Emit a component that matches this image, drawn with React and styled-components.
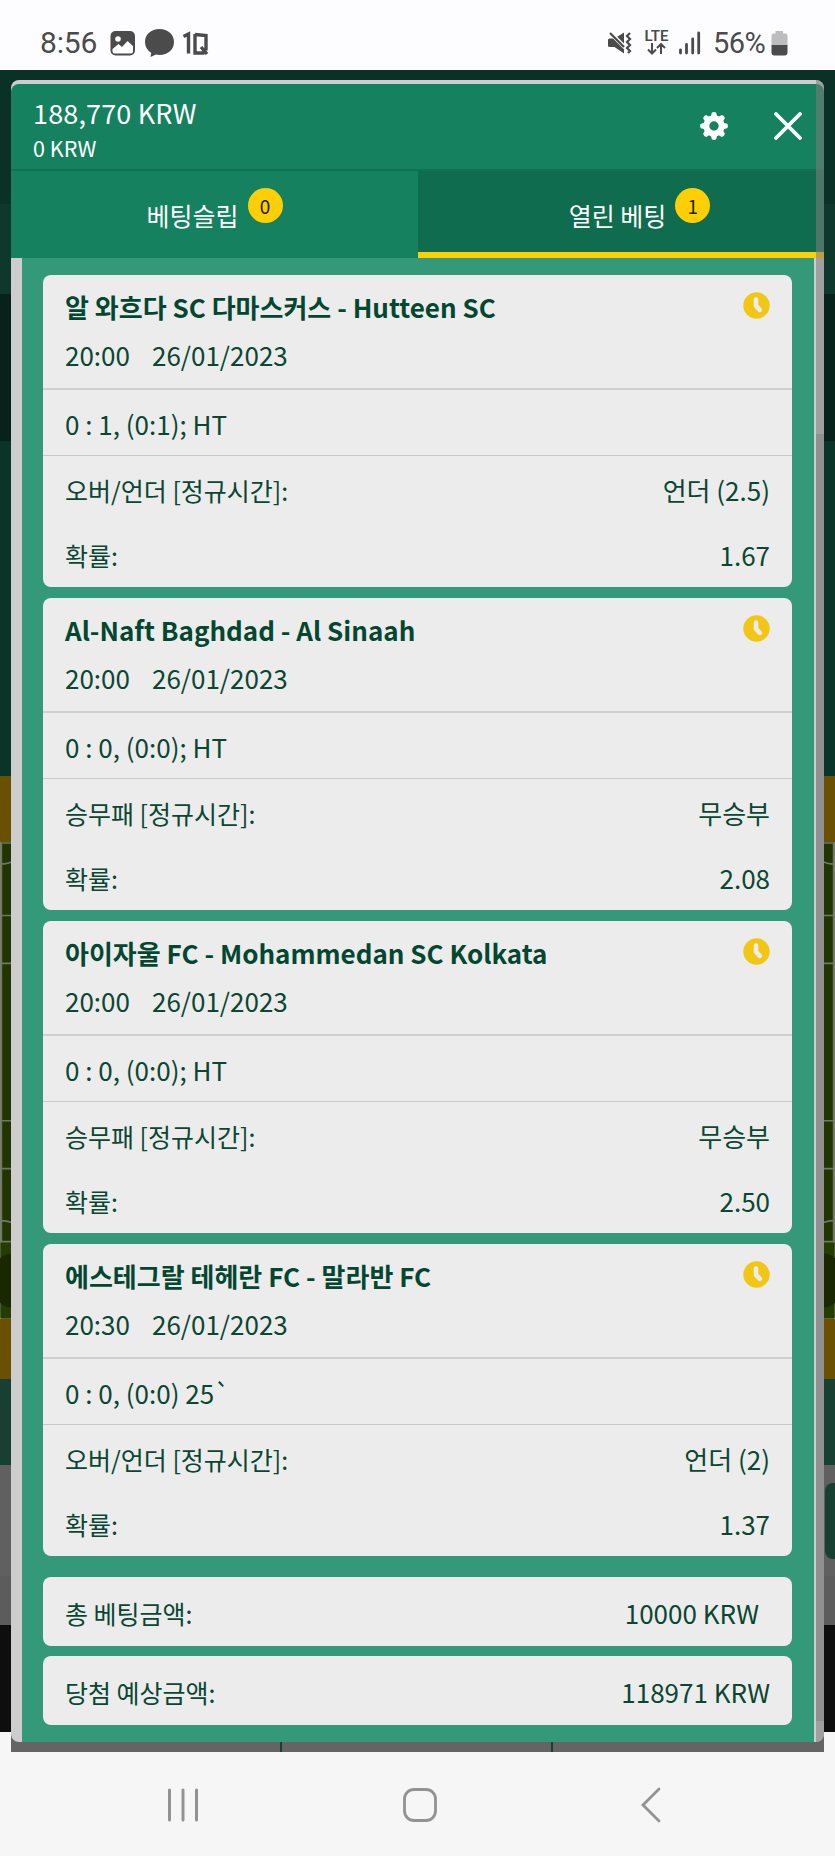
import React from 'react';
import styled, { createGlobalStyle } from 'styled-components';

const Global = createGlobalStyle`
  * { box-sizing: border-box; }
  body { margin: 0; font-family: "Noto Sans CJK KR", sans-serif; }
`;
const Phone = styled.div`
  width: 835px; height: 1856px; overflow: hidden;
  display: flex; flex-direction: column; background: #f6f6f6;
`;
const StatusBar = styled.header`
  height: 69.5px; flex: none; background: #fdfdff; color: #4b4b4b;
  display: flex; align-items: center; justify-content: space-between;
  padding: 16px 47px 0 40px;
  font: 400 30px/36px Roboto, sans-serif;
`;
const StatusGroup = styled.div`
  display: flex; align-items: center;
  > svg { display: block; flex: none; }
`;
const Clock = styled.span`width: 70px; letter-spacing: -0.2px; white-space: nowrap;`;
const Percent = styled.span`width: 58px; font-size: 29px; letter-spacing: -0.5px; white-space: nowrap;`;
const Network = styled.span`
  display: flex; flex-direction: column; align-items: center; width: 27px; margin-right: 8px;
  font: 600 15px/13px Roboto, sans-serif;
`;

const Stage = styled.main`
  display: grid; height: 1682px; flex: none;
  > * { grid-area: 1 / 1; }
`;
const Backdrop = styled.div`display: flex; flex-direction: column; overflow: hidden;`;
const Band = styled.div`
  flex: none; height: ${p => p.$h}px; background: ${p => p.$bg};
  display: flex; justify-content: flex-end; align-items: flex-start;
`;
const SideButton = styled.div`
  width: 40px; height: 76px; margin: 18px -30px 0 0; border-radius: 8px; background: #173f32;
`;
const FooterCells = styled.div`
  align-self: flex-end; width: 813px; height: 20px; margin-right: 11px; background: #646464;
  display: grid; grid-template-columns: 271px 271px 1fr;
`;
const FooterCell = styled.span`border-right: ${p => (p.$last ? 0 : 2)}px solid #173f32;`;

const Dialog = styled.section`
  position: relative; margin: 10.5px 11px 0; width: 813px; height: 1662px;
  border-radius: 8px; overflow: hidden; background: #cdcdcd;
  display: flex; flex-direction: column;
`;
const Header = styled.div`
  height: 86.5px; margin-top: 4px; flex: none; background: #15815f; color: #fff;
  border-radius: 8px 8px 0 0; border-bottom: 2px solid #107253;
  display: flex; justify-content: space-between; padding: 0 22px;
`;
const Balance = styled.div`
  display: flex; flex-direction: column; padding-top: 10px;
`;
const Amount = styled.span`font-size: 27px; line-height: 38px; letter-spacing: .15px;`;
const Bonus = styled.span`font-size: 21.5px; line-height: 32px;`;
const Actions = styled.div`
  display: flex; gap: 46px; align-items: center; height: 84px;
`;
const Tabs = styled.div`
  height: 87px; flex: none; display: grid; grid-template-columns: 407px 1fr; background: #15815f;
`;
const Tab = styled.div`
  display: flex; justify-content: center; color: #fff; font-size: 25px; line-height: 36px;
  padding-top: ${p => (p.$active ? 26 : 26)}px;
  background: ${p => (p.$active ? '#106c4f' : '#15815f')};
  border-bottom: ${p => (p.$active ? '6px solid #ffcf06' : '0')};
  padding-left: ${p => (p.$active ? 37 : 0)}px;
  ${p => p.$active && 'padding-right: 0;'}
`;
const Count = styled.span`
  width: 35px; height: 35px; border-radius: 50%; margin: -9px 0 0 9px;
  background: #ffcf06; color: #181c10; font-size: 19px; line-height: 35px; text-align: center;
`;
const List = styled.div`
  flex: 1; margin: 0 10.5px 0 11px; background: #349979;
  padding: 17px 21.5px 0 21px; color: #0a4632;
`;
const Card = styled.article`
  height: 312px; margin-bottom: 11px; border-radius: 8px; background: #ececec;
  font-size: 26px; line-height: 38px;
`;
const CardTop = styled.div`
  height: 115px; padding: 13px 22px 0; border-bottom: 2px solid #cfcfcf;
`;
const TitleRow = styled.div`
  display: flex; justify-content: space-between; height: 48px;
  > svg { margin-top: 4.5px; }
`;
const Teams = styled.h2`
  margin: 0; font: 700 26px/38px "Noto Sans CJK KR", sans-serif; color: #044731;
  letter-spacing: ${p => p.$ls || 0}px; white-space: nowrap;
`;
const Kickoff = styled.div`display: flex; gap: 22px;`;
const Score = styled.div`
  height: 66px; padding: 15px 22px 0; border-bottom: 1px solid #c8c8c8;
`;
const Line = styled.div`
  display: flex; justify-content: space-between; height: 65px; padding: 15px 22px 0;
`;
const Label = styled.span`font-size: 25px;`;
const Total = styled.div`
  height: 69px; border-radius: 8px; background: #ececec; font-size: 26px; line-height: 38px;
  margin-top: ${p => p.$mt}px; padding: 17px ${p => p.$pr}px 0 22px;
  display: flex; justify-content: space-between;
`;
const ScrollTrack = styled.div`
  position: absolute; right: 0; top: 0; width: 8px; height: 100%;
  background: rgba(125,125,125,.56);
`;
const ScrollThumb = styled.div`
  margin-top: 353.5px; height: 1287px; background: rgba(120,120,120,.4);
`;
const NavBar = styled.nav`
  flex: 1; background: #f6f6f6; display: flex; justify-content: space-between;
  padding: 35px 173px 0 166px;
`;

const ClockIcon = () => (
  <svg width="27" height="27" viewBox="0 0 27 27">
    <circle cx="13.5" cy="13.5" r="13.2" fill="#f1c615" />
    <path d="M13 7.5v6.3l3.8 4" fill="none" stroke="#ececec" strokeWidth="4.6" strokeLinecap="round" strokeLinejoin="round" />
  </svg>
);
const PitchSide = () => (
  <svg width="835" height="477" viewBox="0 842 835 477">
    <rect y="842" width="835" height="477" fill="#203502" />
    <rect y="1243" width="835" height="76" fill="#263d02" />
    <rect x="-5" y="1254" width="845" height="54" rx="16" fill="#1a2801" />
    <g fill="none" stroke="#707864" strokeWidth="1.6">
      <path d="M1 843H834V1242H1ZM1 915.5H834M1 963.5H834M1 1121H834M1 1169H834" />
      <path d="M0 864Q8 864 13 861M835 864Q827 864 822 861M0 1221Q8 1221 13 1224M835 1221Q827 1221 822 1224" />
    </g>
  </svg>
);
const StatusLeft = () => (
  <StatusGroup>
    <Clock>8:56</Clock>
    <svg width="100" height="30" viewBox="110 28 100 30">
      <rect x="110.5" y="31" width="24.5" height="24.5" rx="5" fill="#4b4b4b" />
      <circle cx="118" cy="39" r="2.8" fill="#fdfdff" />
      <path d="M112.5 49l6-5 3.500 3 5.500-6 5.500 5v5.500q0 2-2 2h-16.500q-2 0-2-2Z" fill="#fdfdff" />
      <path d="M159.500 29c8.500 0 14.500 5.500 14.500 13s-6 13-14.500 13q-2 0-3.500-.4l-5.500 2.400q.2-2 .8-4-6.300-4-6.300-11c0-7.500 6-13 14.500-13Z" fill="#4b4b4b" />
      <path d="M183.500 36.500l5-2.500v19.500M195 34v19l9.500 0M195 34.500l11 1v15M201 47l6 7" fill="none" stroke="#4b4b4b" strokeWidth="3.400" />
    </svg>
  </StatusGroup>
);
const StatusRight = () => (
  <StatusGroup>
    <svg width="36" height="26" viewBox="606 30 36 26">
      <path d="M607 40q0-1.500 1.500-1.500h5l9.500-6v21l-9.500-6.500h-5q-1.500 0-1.500-1.500Z" fill="#4b4b4b" />
      <path d="M608 31.500l16 16" stroke="#fdfdff" strokeWidth="4" />
      <path d="M609 33l14 14M629 33l-3 3 3 3-3 3 3 3-3 3 3 3-2 2" fill="none" stroke="#4b4b4b" strokeWidth="2.200" />
    </svg>
    <Network>LTE
      <svg width="19" height="12" viewBox="0 0 19 12"><path d="M5 0v10M1 6.500l4 4 4-4M14 11V1M10 5l4-4 4 4" fill="none" stroke="#4b4b4b" strokeWidth="2" /></svg>
    </Network>
    <svg width="35" height="24" viewBox="677 31 35 24">
      <path d="M679.500 50v3M685.500 44.500V53M691.700 39V53M697.700 33V53" stroke="#4b4b4b" strokeWidth="2.800" strokeLinecap="round" />
    </svg>
    <Percent>56%</Percent>
    <svg width="17" height="26" viewBox="770 30 17 26">
      <path d="M774.500 31h7.500v2.500h2.500q2 0 2 2V46H770.500V35.500q0-2 2-2h2Z" fill="#bdbdbf" />
      <path d="M770.500 45h16v7.500q0 3-3 3h-10q-3 0-3-3Z" fill="#4b4b4b" />
    </svg>
  </StatusGroup>
);
const Gear = () => (
  <svg width="28" height="28" viewBox="-14 -14 28 28">
    <g fill="#fff">
      {[0, 45, 90, 135, 180, 225, 270, 315].map(a => (
        <path key={a} transform={`rotate(${a})`} d="M-3.200-9L-2.200-13.200Q0-14.600 2.200-13.200L3.200-9Z" />
      ))}
    </g>
    <circle r="7.700" fill="none" stroke="#fff" strokeWidth="6" />
  </svg>
);

const bets = [
  { teams: '알 와흐다 SC 다마스커스 - Hutteen SC', time: '20:00', score: '0 : 1, (0:1); HT', market: '오버/언더 [정규시간]:', pick: '언더 (2.5)', odds: '1.67' },
  { teams: 'Al-Naft Baghdad - Al Sinaah', time: '20:00', score: '0 : 0, (0:0); HT', market: '승무패 [정규시간]:', pick: '무승부', odds: '2.08' },
  { teams: '아이자울 FC - Mohammedan SC Kolkata', time: '20:00', score: '0 : 0, (0:0); HT', market: '승무패 [정규시간]:', pick: '무승부', odds: '2.50' },
  { teams: '에스테그랄 테헤란 FC - 말라반 FC', time: '20:30', score: '0 : 0, (0:0) 25`', market: '오버/언더 [정규시간]:', pick: '언더 (2)', odds: '1.37' },
];

export default function App() {
  return (
    <Phone>
      <Global />
      <StatusBar><StatusLeft /><StatusRight /></StatusBar>
      <Stage>
        <Backdrop>
          <Band $h={134} $bg="#093126" />
          <Band $h={90.5} $bg="#0d382b" />
          <Band $h={147} $bg="#06221a" />
          <Band $h={335} $bg="#093428" />
          <Band $h={66} $bg="#6a5102" />
          <PitchSide />
          <Band $h={60} $bg="#6a5102" />
          <Band $h={86} $bg="#173f32" />
          <Band $h={111} $bg="#606060"><SideButton /></Band>
          <Band $h={49} $bg="#5c5c5c" />
          <Band $h={107} $bg="#0e0e0e" />
          <FooterCells><FooterCell /><FooterCell /><FooterCell $last /></FooterCells>
        </Backdrop>
        <Dialog>
          <Header>
            <Balance><Amount>188,770 KRW</Amount><Bonus>0 KRW</Bonus></Balance>
            <Actions>
              <Gear />
              <svg width="28" height="28" viewBox="0 0 28 28"><path d="M2 2L26 26M26 2L2 26" stroke="#fff" strokeWidth="3.800" strokeLinecap="round" /></svg>
            </Actions>
          </Header>
          <Tabs>
            <Tab>베팅슬립<Count>0</Count></Tab>
            <Tab $active>열린 베팅<Count>1</Count></Tab>
          </Tabs>
          <List>
            {bets.map(b => (
              <Card key={b.teams}>
                <CardTop>
                  <TitleRow><Teams>{b.teams}</Teams><ClockIcon /></TitleRow>
                  <Kickoff><span>{b.time}</span><span>26/01/2023</span></Kickoff>
                </CardTop>
                <Score>{b.score}</Score>
                <Line><Label>{b.market}</Label><span>{b.pick}</span></Line>
                <Line><Label>확률:</Label><span>{b.odds}</span></Line>
              </Card>
            ))}
            <Total $mt={21} $pr={33}><Label>총 베팅금액:</Label><span>10000 KRW</span></Total>
            <Total $mt={10} $pr={22}><Label>당첨 예상금액:</Label><span>118971 KRW</span></Total>
          </List>
          <ScrollTrack><ScrollThumb /></ScrollTrack>
        </Dialog>
      </Stage>
      <NavBar>
        <svg width="34" height="36" viewBox="0 0 34 36"><path d="M3.500 3v30M17 3v30M30.500 3v30" stroke="#929292" strokeWidth="3" strokeLinecap="round" /></svg>
        <svg width="36" height="36" viewBox="0 0 36 36"><rect x="2.500" y="2.500" width="31" height="31" rx="9.500" fill="none" stroke="#929292" strokeWidth="2.800" /></svg>
        <svg width="22" height="36" viewBox="0 0 22 36"><path d="M19 2L3 18L19 34" fill="none" stroke="#929292" strokeWidth="2.800" strokeLinecap="round" /></svg>
      </NavBar>
    </Phone>
  );
}
